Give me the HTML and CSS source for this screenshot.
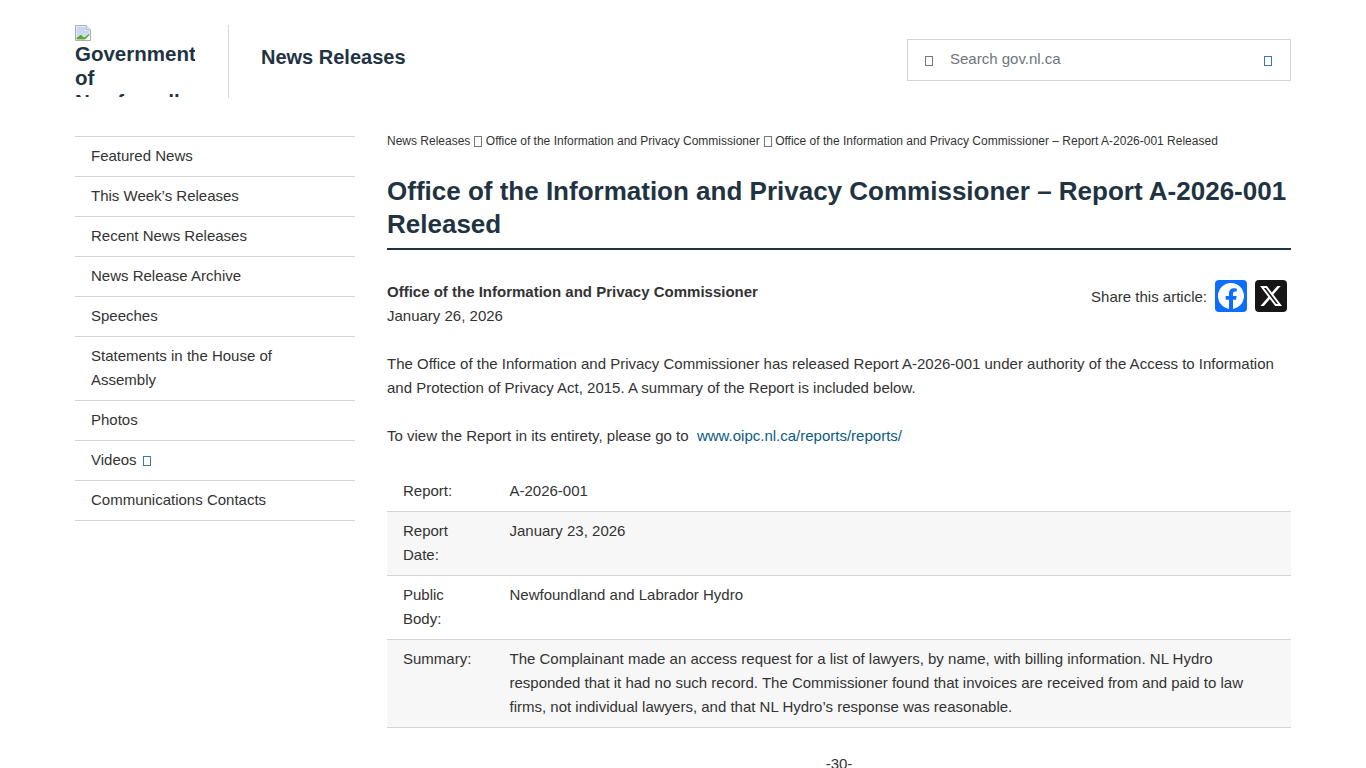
FILE: index.html
```html
<!DOCTYPE html>
<html lang="en">
<head>
    <meta charset="UTF-8">
    <meta name="viewport" content="width=device-width, initial-scale=1.0">
    <title>Office of the Information and Privacy Commissioner – Report A-2026-001 Released</title>
    <link rel="stylesheet" href="styles.css">
</head>
<body>
    <header class="site-header">
        <div class="logo">
            <svg class="broken-img" width="16" height="16" viewBox="0 0 16 16">
                <path d="M0.5 0.5H11L15.5 5V15.5H0.5Z" fill="#fff" stroke="#a9adb5"/>
                <path d="M11 0.5V5H15.5" fill="#dfe3ea" stroke="#a9adb5"/>
                <path d="M1.5 1.5H10V6H14.5V8L9 12L6 9L1.5 12Z" fill="#c9d7f0"/>
                <path d="M1.5 14.5V12.5L6 9.5L9 12.5L14.5 8.5V10L10 14.5Z" fill="#5aa83c"/>
            </svg>
            <span class="logo-alt">Government of Newfoundland and Labrador</span>
        </div>
        <div class="site-title">News Releases</div>
        <form class="search">
            <span class="tofu"></span>
            <span class="search-text">Search gov.nl.ca</span>
            <span class="tofu tofu-link"></span>
        </form>
    </header>

    <div class="page">
        <nav class="side-nav">
            <a href="#">Featured News</a>
            <a href="#">This Week’s Releases</a>
            <a href="#">Recent News Releases</a>
            <a href="#">News Release Archive</a>
            <a href="#">Speeches</a>
            <a href="#">Statements in the House of Assembly</a>
            <a href="#">Photos</a>
            <a href="#">Videos <span class="tofu tofu-link tofu-nav"></span></a>
            <a href="#">Communications Contacts</a>
        </nav>

        <main class="content">
            <div class="breadcrumb">
                <a href="#">News Releases</a> <span class="tofu tofu-small"></span>
                <a href="#">Office of the Information and Privacy Commissioner</a> <span class="tofu tofu-small"></span>
                <span>Office of the Information and Privacy Commissioner – Report A-2026-001 Released</span>
            </div>
            <h1>Office of the Information and Privacy Commissioner – Report A-2026-001 Released</h1>

            <div class="meta">
                <div class="byline">
                    <strong>Office of the Information and Privacy Commissioner</strong><br>
                    January 26, 2026
                </div>
                <div class="share">
                    <span class="share-label">Share this article:</span>
                    <a href="#" class="share-btn fb">
                        <svg width="26" height="26" viewBox="0 0 24 24"><path fill="#fff" d="M24 12.073c0-6.627-5.373-12-12-12s-12 5.373-12 12c0 5.99 4.388 10.954 10.125 11.854v-8.385H7.078v-3.47h3.047V9.43c0-3.007 1.792-4.669 4.533-4.669 1.312 0 2.686.235 2.686.235v2.953H15.83c-1.491 0-1.956.925-1.956 1.874v2.25h3.328l-.532 3.47h-2.796v8.385C19.612 23.027 24 18.062 24 12.073z"/></svg>
                    </a>
                    <a href="#" class="share-btn x">
                        <svg width="22" height="22" viewBox="0 0 24 24"><path fill="#fff" d="M18.901 1.153h3.68l-8.04 9.19L24 22.846h-7.406l-5.8-7.584-6.638 7.584H.474l8.6-9.83L0 1.154h7.594l5.243 6.932ZM17.61 20.644h2.039L6.486 3.24H4.298Z"/></svg>
                    </a>
                </div>
            </div>

            <p>The Office of the Information and Privacy Commissioner has released Report A-2026-001 under authority of the Access to Information and Protection of Privacy Act, 2015. A summary of the Report is included below.</p>
            <p>To view the Report in its entirety, please go to&nbsp; <a href="#" class="link">www.oipc.nl.ca/reports/reports/</a></p>

            <table class="report">
                <tr>
                    <td class="label">Report:</td>
                    <td>A-2026-001</td>
                </tr>
                <tr>
                    <td class="label">Report Date:</td>
                    <td>January 23, 2026</td>
                </tr>
                <tr>
                    <td class="label">Public Body:</td>
                    <td>Newfoundland and Labrador Hydro</td>
                </tr>
                <tr>
                    <td class="label">Summary:</td>
                    <td>The Complainant made an access request for a list of lawyers, by name, with billing information. NL Hydro responded that it had no such record. The Commissioner found that invoices are received from and paid to law firms, not individual lawyers, and that NL Hydro’s response was reasonable.</td>
                </tr>
            </table>

            <p class="end-mark">-30-</p>
        </main>
    </div>
</body>
</html>
```

FILE: styles.css
```css
* { box-sizing: border-box; }
body {
    margin: 0;
    background: #fff;
    color: #333;
    font-family: "Liberation Sans", Arial, sans-serif;
    font-size: 15px;
    line-height: 24px;
}
a { color: inherit; text-decoration: none; }

.site-header {
    display: flex;
    align-items: center;
    margin: 0 75px;
    padding-top: 25px;
    height: 98px;
}
.logo {
    width: 154px;
    height: 73px;
    border-right: 1px solid #d6d9dc;
    color: #1f3342;
    font-size: 20.5px;
    font-weight: 700;
}
.broken-img { display: block; margin-bottom: 1px; }
.logo-alt {
    display: block;
    width: 120px;
    height: 55px;
    overflow: hidden;
}
.site-title {
    margin-left: 32px;
    margin-bottom: 10px;
    color: #1f3342;
    font-size: 20px;
    font-weight: 700;
}
.search {
    display: flex;
    align-items: center;
    width: 384px;
    height: 42px;
    margin-left: auto;
    margin-top: -3px;
    padding: 0 18px 0 17px;
    border: 1px solid #d0d4d8;
    color: #6c757d;
}
.search-text { margin-left: 17px; margin-top: -2px; }
.search .tofu { color: #777; margin-top: 2px; }
.search .tofu-link { margin-left: auto; color: #3d7a9c; }

/* missing icon font shows as an empty box */
.tofu {
    display: inline-block;
    width: 8px;
    height: 10px;
    border: 1px solid currentColor;
    vertical-align: -1px;
}
.tofu-link { color: #3d7a9c; }
.tofu-nav { margin-left: 2px; }
.tofu-small {
    width: 8px;
    height: 11px;
    margin-left: 0.75px;
    vertical-align: -2px;
    color: #777;
}

.page {
    display: flex;
    gap: 32px;
    margin: 0 75px;
    padding-top: 38px;
}
.side-nav {
    width: 280px;
    flex-shrink: 0;
    border-top: 1px solid #d0d4d8;
    align-self: flex-start;
}
.side-nav a {
    display: block;
    padding: 7px 16px 8px;
    border-bottom: 1px solid #d0d4d8;
}
.content { flex: 1; min-width: 0; }

.breadcrumb {
    font-size: 12px;
    line-height: 18px;
    margin-top: -4px;
}
h1 {
    margin: 25px 0 0;
    padding-bottom: 7px;
    border-bottom: 2px solid #1f3342;
    color: #1f3342;
    font-size: 26px;
    line-height: 33px;
    font-weight: 700;
}
.meta {
    display: flex;
    justify-content: space-between;
    align-items: flex-start;
    margin-top: 30px;
}
.share { display: flex; align-items: center; gap: 8px; padding-right: 4px; }
.share-label { margin-top: 2px; }
.share-btn {
    display: flex;
    align-items: center;
    justify-content: center;
    width: 32px;
    height: 32px;
    border-radius: 4px;
}
.fb { background: #0d6efd; }
.x { background: #161616; }

p { margin: 24px 0; }
.link { color: #0b5a84; }

.report { width: 100%; border-collapse: collapse; }
.report td {
    padding: 7px 16px 8px;
    vertical-align: top;
    border-bottom: 1px solid #d0d4d8;
}
.report .label { width: 106.5px; }
.report tr:nth-child(even) td { background: #f7f7f7; }
.end-mark { text-align: center; margin-top: 24px; }
```
